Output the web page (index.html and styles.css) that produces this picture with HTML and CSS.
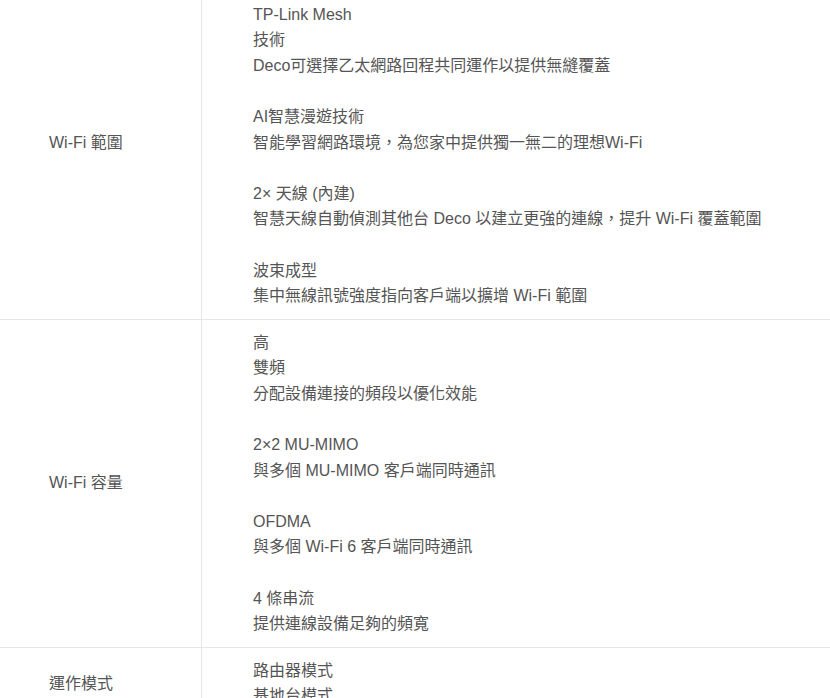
FILE: index.html
```html
<!DOCTYPE html>
<html lang="zh-Hant">
<head>
<meta charset="utf-8">
<title>規格</title>
<link rel="stylesheet" href="styles.css">
</head>
<body>
<table class="spec">
  <tbody>
    <tr>
      <th class="label">Wi-Fi 範圍</th>
      <td class="value">
        <p class="group">3-4 房的住宅 (2 入組)<br>TP-Link Mesh<br>技術<br>Deco可選擇乙太網路回程共同運作以提供無縫覆蓋</p>
        <p class="group">AI智慧漫遊技術<br>智能學習網路環境，為您家中提供獨一無二的理想Wi-Fi</p>
        <p class="group">2× 天線 (內建)<br>智慧天線自動偵測其他台 Deco 以建立更強的連線，提升 Wi-Fi 覆蓋範圍</p>
        <p class="group">波束成型<br>集中無線訊號強度指向客戶端以擴增 Wi-Fi 範圍</p>
      </td>
    </tr>
    <tr>
      <th class="label">Wi-Fi 容量</th>
      <td class="value">
        <p class="group">高<br>雙頻<br>分配設備連接的頻段以優化效能</p>
        <p class="group">2×2 MU-MIMO<br>與多個 MU-MIMO 客戶端同時通訊</p>
        <p class="group">OFDMA<br>與多個 Wi-Fi 6 客戶端同時通訊</p>
        <p class="group">4 條串流<br>提供連線設備足夠的頻寬</p>
      </td>
    </tr>
    <tr>
      <th class="label">運作模式</th>
      <td class="value">
        <p class="group">路由器模式<br>基地台模式</p>
      </td>
    </tr>
  </tbody>
</table>
</body>
</html>
```

FILE: styles.css
```css
html, body {
  margin: 0;
  padding: 0;
  background: #ffffff;
}

body {
  font-family: "Liberation Sans", Arial, "Noto Sans CJK TC", sans-serif;
  font-size: 16px;
  line-height: 25.6px;
  color: #555555;
}

.spec {
  width: 100%;
  border-collapse: collapse;
  margin-top: -34px;
}

.spec tr {
  border-bottom: 1px solid #e6e6e6;
}

.label {
  width: 152px;
  padding: 0 0 0 49px;
  text-align: left;
  font-weight: normal;
  vertical-align: middle;
  border-right: 1px solid #e6e6e6;
}

.value {
  padding: 10px 0 10px 51px;
  vertical-align: top;
}

.group {
  margin: 0 0 25.6px;
}

.group:last-child {
  margin-bottom: 0;
}
```
